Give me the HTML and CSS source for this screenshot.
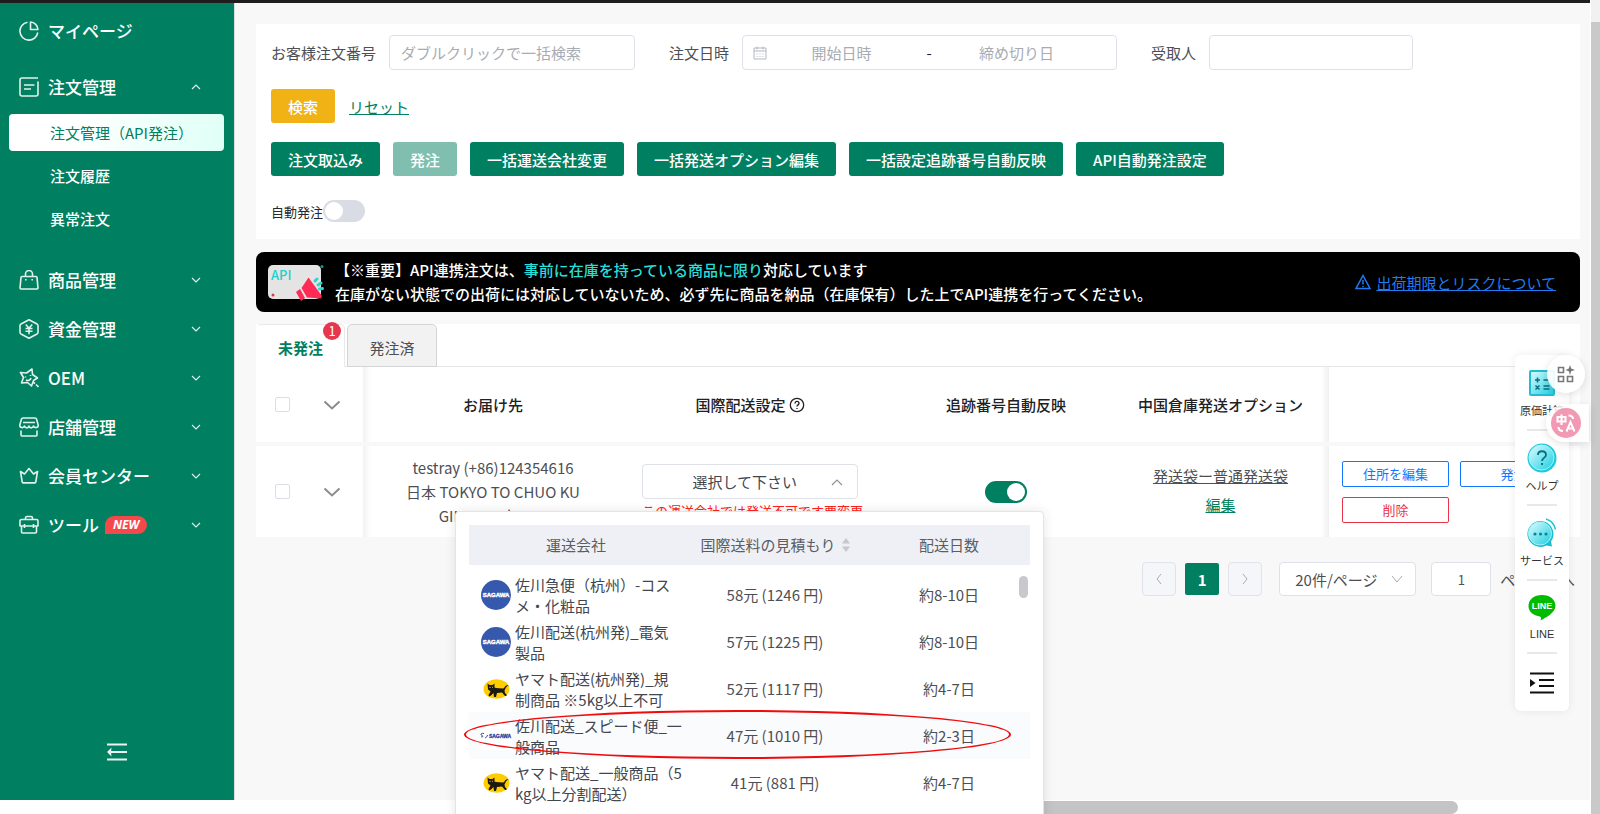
FILE: index.html
```html
<!DOCTYPE html>
<html lang="ja">
<head>
<meta charset="utf-8">
<title>注文管理（API発注）</title>
<link rel="stylesheet" href="styles.css">
</head>
<body>
<div class="topbar"></div>
<div class="app">
  <nav class="sidebar">
    <a class="menu-item menu-home" href="#">
      <svg class="menu-icon" viewBox="0 0 20 20"><path d="M8.5 1.2A9 9 0 1 0 18.8 11.500"/><path d="M11.500 1v7.500H19C18.800 4.500 15.500 1.200 11.500 1z"/></svg>
      <span>マイページ</span>
    </a>
    <a class="menu-item" href="#">
      <svg class="menu-icon" viewBox="0 0 20 20"><path d="M19 1H3a2 2 0 0 0-2 2v14a2 2 0 0 0 2 2h14a2 2 0 0 0 2-2V4.500M5 8h10.500M5 12h7"/></svg>
      <span>注文管理</span>
      <svg class="caret" viewBox="0 0 10 6"><path d="M1 5l4-4 4 4"/></svg>
    </a>
    <div class="submenu">
      <a class="sub-item active" href="#">注文管理（API発注）</a>
      <a class="sub-item" href="#">注文履歴</a>
      <a class="sub-item" href="#">異常注文</a>
    </div>
    <a class="menu-item" href="#">
      <svg class="menu-icon" viewBox="0 0 20 20"><path d="M3 6.500h14a1 1 0 0 1 1 .900L19 18a1 1 0 0 1-1 1H2a1 1 0 0 1-1-1L2 7.400a1 1 0 0 1 1-.900zM6.500 6V4a3.200 3.200 0 0 1 7 0v2M6.800 9v1.500M13.200 9v1.500"/></svg>
      <span>商品管理</span>
      <svg class="caret" viewBox="0 0 10 6"><path d="M1 1l4 4 4-4"/></svg>
    </a>
    <a class="menu-item" href="#">
      <svg class="menu-icon" viewBox="0 0 20 20"><path d="M10 .800l8 4.200a2 2 0 0 1 1 1.500v7a2 2 0 0 1-1 1.500l-8 4.200-8-4.200a2 2 0 0 1-1-1.500v-7A2 2 0 0 1 2 5zM6.800 5.500L10 9.200l3.200-3.700M10 9.200v6M6.500 9.500h7M6.500 12.300h7"/></svg>
      <span>資金管理</span>
      <svg class="caret" viewBox="0 0 10 6"><path d="M1 1l4 4 4-4"/></svg>
    </a>
    <a class="menu-item" href="#">
      <svg class="menu-icon" viewBox="0 0 20 20"><path d="M12.500 18l-4-3.500-6 .500 2-5.500L1.500 4.500l6 .500 5.500-4 .500 5.500 5 3.500-4 2.500zM6.500 8.500v1M11.500 7v1M7 12c2 1.200 4.500.300 5-2M14.500 14.500l1.500 1M17 16.500l2.500 2.500"/></svg>
      <span>OEM</span>
      <svg class="caret" viewBox="0 0 10 6"><path d="M1 1l4 4 4-4"/></svg>
    </a>
    <a class="menu-item" href="#">
      <svg class="menu-icon" viewBox="0 0 20 20"><path d="M4 1h12a1.500 1.500 0 0 1 1.500 1l1.700 6c.300 3-3.700 3.500-4.700 1-1 2.500-3.800 2.500-4.500 0-.700 2.500-3.500 2.500-4.500 0-1 2.500-5 2-4.700-1l1.700-6A1.500 1.500 0 0 1 4 1zM4 5.500h12M2 13.500V18a1 1 0 0 0 1 1h14a1 1 0 0 0 1-1v-4.500"/></svg>
      <span>店舗管理</span>
      <svg class="caret" viewBox="0 0 10 6"><path d="M1 1l4 4 4-4"/></svg>
    </a>
    <a class="menu-item" href="#">
      <svg class="menu-icon" viewBox="0 0 20 20"><path d="M1.500 5.500l4 2.500L10 2.500 14.500 8l4-2.500-1.700 10.500a1 1 0 0 1-1 .900H4.200a1 1 0 0 1-1-.900z"/></svg>
      <span>会員センター</span>
      <svg class="caret" viewBox="0 0 10 6"><path d="M1 1l4 4 4-4"/></svg>
    </a>
    <a class="menu-item" href="#">
      <svg class="menu-icon" viewBox="0 0 20 20"><path d="M2.500 4.500h15a1.500 1.500 0 0 1 1.500 1.500v5H1V6a1.500 1.500 0 0 1 1.500-1.500zM2.500 11v6a1 1 0 0 0 1 1h13a1 1 0 0 0 1-1v-6M6.500 4.500V3A1.500 1.500 0 0 1 8 1.500h4A1.500 1.500 0 0 1 13.500 3v1.500M5.500 9v4M14.500 9v4"/></svg>
      <span>ツール</span><em class="tag-new">NEW</em>
      <svg class="caret" viewBox="0 0 10 6"><path d="M1 1l4 4 4-4"/></svg>
    </a>
    <button class="collapse" type="button" aria-label="メニューを閉じる">
      <svg viewBox="0 0 20 18"><path d="M0 1.500h20M2 9h18M0 16.500h20" /><path class="fill" d="M0 9l4.500-4.500-.5 4.500 .5 4.500z"/></svg>
    </button>
  </nav>

  <main class="content">
    <section class="filters">
      <div class="filter-row">
        <label for="order-no">お客様注文番号</label>
        <input class="field field-order" id="order-no" type="text" placeholder="ダブルクリックで一括検索">
        <label for="date-from">注文日時</label>
        <div class="field date-range">
          <svg viewBox="0 0 14 14"><path d="M1 2h12v11H1zM1 5h12M4 .500v3M10 .500v3M3.500 8h1M6.500 8h1M9.500 8h1M3.500 10.500h1M6.500 10.500h1M9.500 10.500h1"/></svg>
          <input id="date-from" type="text" placeholder="開始日時">
          <span>-</span>
          <input type="text" placeholder="締め切り日" aria-label="締め切り日">
        </div>
        <label for="receiver">受取人</label>
        <input class="field field-receiver" id="receiver" type="text">
      </div>
      <div class="search-row">
        <button class="btn btn-search" type="button">検索</button>
        <a class="link-green" href="#">リセット</a>
      </div>
      <div class="action-row">
        <button class="btn" type="button">注文取込み</button>
        <button class="btn btn-disabled" type="button">発注</button>
        <button class="btn" type="button">一括運送会社変更</button>
        <button class="btn" type="button">一括発送オプション編集</button>
        <button class="btn" type="button">一括設定追跡番号自動反映</button>
        <button class="btn" type="button">API自動発注設定</button>
      </div>
      <div class="auto-row">
        <label for="auto-order">自動発注</label>
        <input class="switch" id="auto-order" type="checkbox">
      </div>
    </section>

    <section class="banner">
      <svg class="banner-art" viewBox="0 0 58 38">
        <rect x="1" y="2" width="53" height="34" rx="5" fill="#e4e4e4"/>
        <text x="4" y="17" class="art-text">API</text>
        <path d="M29 29l4-3 5 9-4 3z" fill="#ff2a55"/>
        <path d="M34.500 25l7-10.500L55 33l-1 2.500-14-1z" fill="#ff2a55"/>
        <path d="M48 18l2-2M51 22l3-2M52.500 26l3-.5" stroke="#25d8d0" stroke-width="3" stroke-linecap="round"/>
        <circle cx="55" cy="3.500" r="1.500" fill="#0f9b8e"/><circle cx="6" cy="32" r="1.500" fill="#e8334f"/>
      </svg>
      <p class="banner-text">【※重要】API連携注文は、<b>事前に在庫を持っている商品に限り</b>対応しています<br>在庫がない状態での出荷には対応していないため、必ず先に商品を納品（在庫保有）した上でAPI連携を行ってください。</p>
      <svg class="warn" viewBox="0 0 16 16"><path d="M8 1.500l7 13H1zM8 6v4.500M8 12v1"/></svg>
      <a class="banner-link" href="#">出荷期限とリスクについて</a>
    </section>

    <section class="orders">
      <div class="tabs">
        <button class="tab active" type="button">未発注<i class="badge">1</i></button>
        <button class="tab" type="button">発注済</button>
      </div>
      <table class="order-table">
        <colgroup><col class="c-check"><col class="c-addr"><col class="c-ship"><col class="c-track"><col class="c-opt"><col class="c-act"></colgroup>
        <thead>
          <tr>
            <th><div class="pick"><input class="check" type="checkbox" aria-label="すべて選択"><svg viewBox="0 0 18 10"><path d="M1.500 1.500L9 8.500l7.500-7"/></svg></div></th>
            <th class="edge-left">お届け先</th>
            <th><div class="th-help">国際配送設定<svg viewBox="0 0 16 16"><circle cx="8" cy="8" r="6.700"/><path d="M6 6.500c0-2.800 4-2.800 4 0 0 1.300-2 1.500-2 3M8 11v1"/></svg></div></th>
            <th>追跡番号自動反映</th>
            <th class="edge-right">中国倉庫発送オプション</th>
            <th></th>
          </tr>
        </thead>
        <tbody>
          <tr>
            <td><div class="pick"><input class="check" type="checkbox" aria-label="注文を選択"><svg viewBox="0 0 18 10"><path d="M1.500 1.500L9 8.500l7.500-7"/></svg></div></td>
            <td class="edge-left">testray (+86)124354616<br>日本 TOKYO TO CHUO KU<br>GINZA 1-chome</td>
            <td class="ship-cell">
              <div class="ship">
                <button class="ship-button" type="button">選択して下さい<svg viewBox="0 0 12 8"><path d="M1 7l5-5 5 5"/></svg></button>
                <p class="ship-error">この運送会社では発送不可です要変更</p>
                <div class="carrier-menu">
                  <div class="carrier-scroll">
                    <table class="carriers">
                      <colgroup><col class="k-name"><col class="k-price"><col class="k-days"></colgroup>
                      <thead><tr><th>運送会社</th><th><div class="th-sort">国際送料の見積もり<svg viewBox="0 0 8 14"><path d="M4 0l4 5.500H0zM4 14l4-5.500H0z"/></svg></div></th><th>配送日数</th></tr></thead>
                      <tbody>
                        <tr><td><div class="carrier"><svg class="logo" viewBox="0 0 32 32"><circle cx="16" cy="16" r="15" fill="#3759ad"/><text x="16" y="18" class="logo-round">SAGAWA</text></svg><span>佐川急便（杭州）-コスメ・化粧品</span></div></td><td>58元 (1246 円)</td><td>約8-10日</td></tr>
                        <tr><td><div class="carrier"><svg class="logo" viewBox="0 0 32 32"><circle cx="16" cy="16" r="15" fill="#3759ad"/><text x="16" y="18" class="logo-round">SAGAWA</text></svg><span>佐川配送(杭州発)_電気製品</span></div></td><td>57元 (1225 円)</td><td>約8-10日</td></tr>
                        <tr><td><div class="carrier"><svg class="logo" viewBox="0 0 32 32"><ellipse cx="16.500" cy="16" rx="13" ry="9.800" fill="#fc0"/><path d="M7.500 10.500l2 1.500h3l2-1.500v4l1.500.500 7 .500c1 0 1.500-1.500 2.500-2.500s2-1 3-.500c-1.500.500-2.500 1.500-3 3l-1 2 .5 2.500 1.500 1.500v1.500h-1.500l-3-3.500-5 .500-1 4H14l-.5-4-2.500 2.500-2 1-.5-1.500 2-3.500-2.500-2z" fill="#1c1a10"/><path d="M9.300 14.300h1.500M12 14.300h1" stroke="#fc0" stroke-width=".8"/></svg><span>ヤマト配送(杭州発)_規制商品 ※5kg以上不可</span></div></td><td>52元 (1117 円)</td><td>約4-7日</td></tr>
                        <tr class="hover"><td><div class="carrier"><svg class="logo" viewBox="0 0 32 32"><path d="M0 2h32v28H0z" fill="#fff"/><path d="M4 13.500c-3-.8-4 1.300-2 2 1.500.5 1 1.800-1 1.300M5 18c1.500-.5 2-1.500 2.500-3" fill="none" stroke="#34479c"/><text x="20" y="18" class="logo-flat">SAGAWA</text></svg><span>佐川配送_スピード便_一般商品</span></div></td><td>47元 (1010 円)</td><td>約2-3日</td></tr>
                        <tr><td><div class="carrier"><svg class="logo" viewBox="0 0 32 32"><ellipse cx="16.500" cy="16" rx="13" ry="9.800" fill="#fc0"/><path d="M7.500 10.500l2 1.500h3l2-1.500v4l1.500.500 7 .500c1 0 1.500-1.500 2.500-2.500s2-1 3-.500c-1.500.500-2.500 1.500-3 3l-1 2 .5 2.500 1.500 1.500v1.500h-1.500l-3-3.500-5 .500-1 4H14l-.5-4-2.500 2.500-2 1-.5-1.500 2-3.500-2.500-2z" fill="#1c1a10"/><path d="M9.300 14.300h1.500M12 14.300h1" stroke="#fc0" stroke-width=".8"/></svg><span>ヤマト配送_一般商品（5kg以上分割配送）</span></div></td><td>41元 (881 円)</td><td>約4-7日</td></tr>
                      </tbody>
                    </table>
                  </div>
                  <div class="menu-thumb"></div>
                  <div class="highlight"></div>
                </div>
              </div>
            </td>
            <td><input class="switch switch-row" type="checkbox" checked aria-label="追跡番号自動反映"></td>
            <td class="edge-right options"><a class="link-grey" href="#">発送袋ー普通発送袋</a><br><a class="link-green" href="#">編集</a></td>
            <td><div class="row-actions"><button class="mini" type="button">住所を編集</button><button class="mini" type="button">発注</button><button class="mini danger" type="button">削除</button></div></td>
          </tr>
        </tbody>
      </table>
    </section>

    <div class="pager">
      <button class="page-btn" type="button" aria-label="前へ"><svg viewBox="0 0 6 12"><path d="M5 1L1 6l4 5"/></svg></button>
      <button class="page-btn current" type="button">1</button>
      <button class="page-btn" type="button" aria-label="次へ"><svg viewBox="0 0 6 12"><path d="M1 1l4 5-4 5"/></svg></button>
      <div class="page-size">
        <select aria-label="表示件数"><option>20件/ページ</option></select>
        <svg viewBox="0 0 12 8"><path d="M1 1l5 6 5-6"/></svg>
      </div>
      <input class="page-input" id="page-no" type="text" value="1">
      <label for="page-no">ページ目へ</label>
    </div>
  </main>
</div>

<div class="scroll-y"></div>
<div class="scroll-x"></div>

<aside class="dock">
  <a href="#" class="dock-item">
    <svg class="dock-icon" viewBox="0 0 30 30"><defs><linearGradient id="cy" x1="0" y1="0" x2="1" y2="1"><stop offset="0" stop-color="#dffcff"/><stop offset="1" stop-color="#19cfe0"/></linearGradient></defs><rect x="3" y="3" width="24" height="24" rx="1" fill="url(#cy)" stroke="#22bdd4" stroke-width="2"/><path d="M8 12h5M10.500 9.500v5M16.500 12h6M8.500 17.500l4 4M12.500 17.500l-4 4M16.500 18h6M16.500 21h6" stroke="#0c6c80" stroke-width="1.500" fill="none"/></svg>
    <span>原価計算</span>
  </a>
  <a href="#" class="dock-item">
    <svg class="dock-icon" viewBox="0 0 30 30"><circle cx="15" cy="15" r="14.500" fill="#20c8dc"/><circle cx="14.500" cy="14.500" r="12.500" fill="url(#cy)" stroke="#a9f1f7"/><path d="M11 12c0-5 8-5 8 0 0 3-4 2.800-4 6M15 20v2" stroke="#086e82" stroke-width="1.800" fill="none"/></svg>
    <span>ヘルプ</span>
  </a>
  <a href="#" class="dock-item">
    <svg class="dock-icon" viewBox="0 0 30 30"><path d="M13.500 3a13 13 0 1 0 6 24.500l5.500 1-1-5A13 13 0 0 0 13.500 3z" fill="#18bdd4"/><circle cx="13" cy="15.500" r="11.500" fill="url(#cy)" stroke="#a9f1f7"/><circle cx="8" cy="16" r="1.600" fill="#07859c"/><circle cx="13.500" cy="16" r="1.600" fill="#07859c"/><circle cx="19" cy="16" r="1.600" fill="#07859c"/><path d="M19 1c5 1.500 8.500 5 9.500 10.500" stroke="#22c3d8" stroke-width="1.500" fill="none"/></svg>
    <span>サービス</span>
  </a>
  <a href="#" class="dock-item">
    <svg class="dock-icon" viewBox="0 0 30 30"><path d="M15 2C7 2 1.500 6.500 1.500 13c0 6 5 9.500 11.500 10.500 1.500.500 1 2.500.5 4 6-3 15-8.500 15-14.500C28.500 6.500 23 2 15 2z" fill="#0b0"/><text x="15" y="16" class="line-text">LINE</text></svg>
    <span class="latin">LINE</span>
  </a>
  <button class="dock-toggle" type="button" aria-label="閉じる"><svg viewBox="0 0 24 22"><path d="M0 1.500h24M9 8h15M9 14h15M0 20.500h24" stroke="#111" stroke-width="2"/><path d="M0 7l5.500 4L0 15z" fill="#111"/></svg></button>
  <div class="float-apps"><svg viewBox="0 0 18 18"><path d="M1.500 2.500h5v5h-5zM1.500 11.500h5v5h-5zM10.500 11.500h5v5h-5z" fill="none" stroke="#777" stroke-width="1.600"/><path d="M13 0l1.200 3.500L18 5l-3.800 1.300L13 10l-1.200-3.700L8.500 5l3.300-1.500z" fill="#777"/></svg></div>
  <div class="float-translate"><svg viewBox="0 0 30 30"><circle cx="15" cy="15" r="15" fill="#f29ab3"/><path d="M6.500 9h8v4.500h-8zM10.500 6.500v10.500M17.500 7.500c3 0 4.500 1 4.500 3.500M7.500 19c0 3 1.500 4 4.500 4M15.500 23.500l4-9.500 4 9.500M17 20.500h5" fill="none" stroke="#fff" stroke-width="2"/></svg></div>
</aside>
</body>
</html>
```

FILE: styles.css
```css
* { box-sizing: border-box; }
html, body { margin: 0; height: 100%; overflow: hidden; background: #fff; }
body, button, input, select {
  font-family: "Noto Sans CJK JP", "Noto Sans", sans-serif;
  font-size: 15px;
  color: #4d4f54;
}
button { cursor: pointer; margin: 0; padding: 0; }
p { margin: 0; }
svg { display: block; fill: none; flex: none; }
body { display: flex; flex-direction: column; position: relative; }

.topbar { height: 3px; background: #1f1d1e; margin-right: 10px; flex: none; }
.app { display: flex; flex: 1; min-height: 0; padding-bottom: 14px; }

/* Sidebar */
.sidebar { width: 234px; flex: none; background: #008060; padding-top: 3px; display: flex; flex-direction: column; }
.menu-item {
  display: flex; align-items: center; height: 49px; flex: none; padding: 0 33px 0 19px;
  color: #fff; font-size: 17px; font-weight: 500; line-height: 24px; text-decoration: none;
}
.menu-home { margin-bottom: 7px; }
.menu-icon { width: 20px; height: 20px; margin-right: 9px; stroke: #e2f1ec; stroke-width: 1.6; stroke-linejoin: round; }
.caret { width: 10px; height: 6px; margin-left: auto; stroke: #e2f1ec; stroke-width: 1.1; }
.submenu { display: flex; flex-direction: column; gap: 6px; padding: 3px 10px 18px 9px; }
.sub-item {
  height: 37px; line-height: 37px; padding-left: 41px; border-radius: 4px;
  color: #fff; font-weight: 500; text-decoration: none;
}
.sub-item.active { color: #008060; font-weight: 400; background: linear-gradient(110deg, #fff 30%, #defff7); }
.tag-new {
  margin-left: 6px; padding: 0 8px; border-radius: 9px 9px 9px 0;
  background: #f5484b; font: italic bold 12px/18px "Noto Sans", sans-serif;
}
.collapse { margin: auto auto 39px; border: 0; background: none; }
.collapse svg { width: 20px; height: 18px; stroke: #e8f4f0; stroke-width: 2; }
.collapse .fill { fill: #e8f4f0; stroke: none; }

/* Content */
.content { flex: 1; min-width: 0; background: #f8f8f8; padding: 21px 10px 0 21px; margin-right: 10px; border-left: 1px solid #dcdfde; }
.filters { background: #fff; padding: 11px 15px 17px; }
.filter-row { display: flex; align-items: center; }
.filter-row label { margin-right: 13px; }
.field { height: 35px; border: 1px solid #dfe0ea; border-radius: 4px; background: #fff; }
.field-order { width: 246px; padding: 0 11px; margin-right: 34px; }
.field-receiver { width: 204px; }
input::placeholder { color: #a9abb2; opacity: 1; }
.date-range { width: 375px; display: flex; align-items: center; margin-right: 34px; padding: 0 25px 0 10px; }
.date-range svg { width: 14px; height: 14px; stroke: #b4b6bf; }
.date-range input { flex: 1; min-width: 0; border: 0; text-align: center; padding: 0; }
.date-range span { color: #222; width: 26px; text-align: center; }
.search-row { display: flex; align-items: center; gap: 14px; margin-top: 19px; }
.action-row { display: flex; gap: 13px; margin-top: 19px; }
.btn { height: 34px; padding: 0 17px; border: 0; border-radius: 3px; background: #008060; color: #fff; font-weight: 500; }
.btn-search { background: #f0b214; }
.btn-disabled { background: #80bfaf; }
.link-green { color: #008060; }
.link-grey { color: #4d4f54; }
.auto-row { display: flex; align-items: center; margin-top: 24px; height: 22px; }
.auto-row label { font-size: 13px; color: #26282b; }
.switch {
  appearance: none; width: 42px; height: 22px; margin: 0; border-radius: 11px; padding: 2px;
  background: #dadce5; display: flex; cursor: pointer;
}
.switch::before { content: ""; width: 18px; height: 18px; border-radius: 9px; background: #fff; }
.switch:checked { background: #008060; justify-content: flex-end; }
.switch-row { margin: 0 auto; }

/* Notice */
.banner { display: flex; align-items: center; margin-top: 13px; height: 60px; padding: 0 24px 0 11px; border-radius: 8px; background: #000; color: #fff; }
.banner-art { width: 58px; height: 38px; margin-right: 10px; }
.art-text { font: 500 13px "Noto Sans CJK JP", sans-serif; fill: #1fcfca; }
.banner-text { flex: 1; line-height: 24px; font-weight: 500; white-space: nowrap; }
.banner-text b { font-weight: 500; color: #27dfda; }
.warn { width: 16px; height: 16px; margin-right: 5px; stroke: #1f7cf0; stroke-width: 1.5; }
.banner-link { color: #1f7cf0; }

/* Orders */
.orders { background: #fff; margin-top: 12px; }
.tabs { display: flex; gap: 2px; height: 43px; border-bottom: 1px solid #e6e6e6; }
.tab { position: relative; width: 90px; height: 43px; border: 1px solid #d5d5d5; border-radius: 5px 5px 0 0; background: #f2f2f2; line-height: 42px; padding-top: 2px; }
.tab.active { width: 89px; background: #fff; border-color: #e9e9e9; border-left-color: #fff; border-bottom-color: #fff; color: #008060; font-weight: 700; }
.badge { position: absolute; top: -3px; right: 3px; width: 18px; height: 18px; border-radius: 9px; background: #e6374f; color: #fff; font: 400 13px/18px "Noto Sans CJK JP", sans-serif; }
.order-table { width: 100%; table-layout: fixed; border-collapse: separate; border-spacing: 0; }
.c-check { width: 107px; } .c-addr { width: 248px; } .c-ship { width: 278px; } .c-track { width: 234px; } .c-opt { width: 206px; } .c-act { width: 251px; }
.order-table th, .order-table td { padding: 0; text-align: center; line-height: 24px; }
.order-table > thead > tr > th { height: 79px; border-bottom: 4px solid #f8f8f8; color: #202124; font-weight: 500; }
.order-table > tbody > tr > td { height: 91px; }
.edge-left { background: linear-gradient(90deg, #f2f2f2, #fff 8px); }
.edge-right { background: linear-gradient(270deg, #f0f0f0, #fff 8px); }
.order-table > * > tr > .edge-left { padding-left: 12px; }
.order-table > * > tr > .edge-right { padding-right: 11px; }
.pick { display: flex; align-items: center; padding-left: 19px; gap: 33px; }
.pick svg { width: 18px; height: 10px; stroke: #8b8b8b; stroke-width: 2; }
.check { appearance: none; width: 15px; height: 15px; margin: 0; border: 1px solid #dcdee6; border-radius: 2px; background: #fff; }
.th-help { display: flex; justify-content: center; align-items: center; gap: 3px; }
.th-help svg { width: 16px; height: 16px; stroke: #202124; stroke-width: 1.3; }
.order-table .ship-cell { vertical-align: top; padding-top: 18px; }
.ship { position: relative; width: 216px; margin: 0 auto; text-align: left; }
.ship-button { display: flex; align-items: center; justify-content: flex-end; gap: 34px; width: 100%; height: 35px; padding-right: 14px; border: 1px solid #dfe1e8; border-radius: 4px; background: #fff; color: #42464e; }
.ship-button svg { width: 12px; height: 8px; stroke: #8f9197; stroke-width: 1.2; }
.ship-error { height: 16px; line-height: 24px; font-size: 13px; color: #f22; white-space: nowrap; }
.order-table .options { line-height: 29px; padding-bottom: 4px; }
.row-actions { display: flex; flex-wrap: wrap; gap: 10px 11px; padding-left: 13px; }
.mini { width: 107px; height: 26px; border: 1px solid #1675ff; border-radius: 2px; background: #fff; color: #1675ff; font-size: 13px; line-height: 22px; }
.mini.danger { border-color: #e8334a; color: #e8334a; }

/* Carrier menu */
.carrier-menu {
  position: absolute; z-index: 5; left: -187px; top: 47px; width: 589px; height: 320px; padding: 13px;
  border: 1px solid #e1e4ec; border-radius: 4px; background: #fff; box-shadow: 0 0 12px rgba(0, 0, 0, .1);
}
.carrier-scroll { height: 282px; overflow: hidden; }
.carriers { width: 100%; table-layout: fixed; border-collapse: separate; border-spacing: 0; }
.k-name { width: 214px; } .k-price { width: 184px; } .k-days { width: 164px; }
.carriers thead th { height: 46px; border-bottom: 6px solid #fff; background: #eff0f5; color: #5b5d63; font-weight: 400; }
.order-table .carriers td { height: 47px; line-height: 21px; }
.hover { background: #fafbfd; }
.th-sort { display: flex; align-items: center; justify-content: center; gap: 6px; }
.th-sort svg { width: 8px; height: 14px; fill: #c6c8ce; }
.carrier { display: flex; align-items: center; gap: 3px; padding-left: 11px; text-align: left; color: #42464e; }
.carrier span { width: 168px; word-break: break-all; line-break: anywhere; }
.logo { width: 32px; height: 32px; }
.logo-round { font: bold 6px "Liberation Sans", sans-serif; fill: #fff; stroke: #fff; stroke-width: .4; text-anchor: middle; }
.logo-flat { font: bold 5px "Liberation Sans", sans-serif; fill: #2b3d98; stroke: #2b3d98; stroke-width: .3; text-anchor: middle; }
.menu-thumb { position: absolute; right: 15px; top: 64px; width: 9px; height: 22px; border-radius: 5px; background: #c8c9cd; }
.highlight { position: absolute; left: 8px; top: 198px; width: 547px; height: 49px; border: 2px solid #f00c0c; border-radius: 50%; }

/* Pager */
.pager { display: flex; justify-content: flex-end; align-items: center; height: 34px; margin-top: 25px; padding-right: 5px; }
.page-btn { width: 34px; height: 34px; margin-right: 9px; display: grid; place-items: center; border: 1px solid #e2e3ea; border-radius: 4px; background: #f5f6fa; }
.page-btn svg { width: 6px; height: 12px; stroke: #a9abb2; }
.page-btn.current { height: 32px; border: 0; border-radius: 2px; background: #008060; color: #fff; font-weight: 700; }
.page-size { position: relative; margin: 0 15px 0 8px; }
.page-size select { appearance: none; width: 137px; height: 34px; padding: 0 15px; border: 1px solid #dfe0ea; border-radius: 4px; background: #fff; }
.page-size svg { position: absolute; right: 13px; top: 13px; width: 12px; height: 8px; stroke: #a9abb2; pointer-events: none; }
.page-input { width: 60px; height: 34px; margin-right: 9px; border: 1px solid #dfe0ea; border-radius: 4px; text-align: center; font-size: 13px; }

/* Scrollbars */
.scroll-y { position: absolute; right: 0; top: 0; width: 9px; height: 100%; background: #c9c9c9; border-top: 22px solid #f1f1f1; }
.scroll-x { position: absolute; left: 50%; right: 142px; bottom: 0; height: 13px; border-radius: 7px; background: #c4c4c7; }

/* Dock */
.dock {
  position: absolute; z-index: 8; right: 31px; top: 355px; width: 54px; padding: 13px 0 17px; border-radius: 6px;
  background: #fff; box-shadow: 0 0 10px rgba(0, 0, 0, .08); display: flex; flex-direction: column; align-items: center;
}
.dock-item { width: 100%; height: 75px; display: flex; flex-direction: column; align-items: center; color: #333; text-decoration: none; font-size: 11px; line-height: 16px; gap: 4px; white-space: nowrap; }
.dock-item::after { content: ""; width: 30px; height: 2px; margin-top: 7px; background: #e8e8e8; }
.dock-icon { width: 30px; height: 30px; }
.dock-item .latin { font-family: "Liberation Sans", sans-serif; line-height: 14px; }
.line-text { font: bold 9px "Liberation Sans", sans-serif; fill: #fff; text-anchor: middle; }
.dock-toggle { border: 0; background: none; margin-top: 4px; }
.dock-toggle svg { width: 24px; height: 22px; }
.float-apps { position: absolute; left: 32px; top: 0; width: 38px; height: 38px; border-radius: 19px; display: grid; place-items: center; background: rgba(255, 255, 255, .92); box-shadow: 0 2px 8px rgba(0, 0, 0, .12); }
.float-apps svg { width: 18px; height: 18px; }
.float-translate { position: absolute; left: 31px; top: 49px; width: 43px; height: 38px; padding: 4px 5px; border-radius: 19px 0 0 19px; background: rgba(255, 255, 255, .85); box-shadow: 0 2px 8px rgba(0, 0, 0, .12); }
.float-translate svg { width: 30px; height: 30px; }
```
